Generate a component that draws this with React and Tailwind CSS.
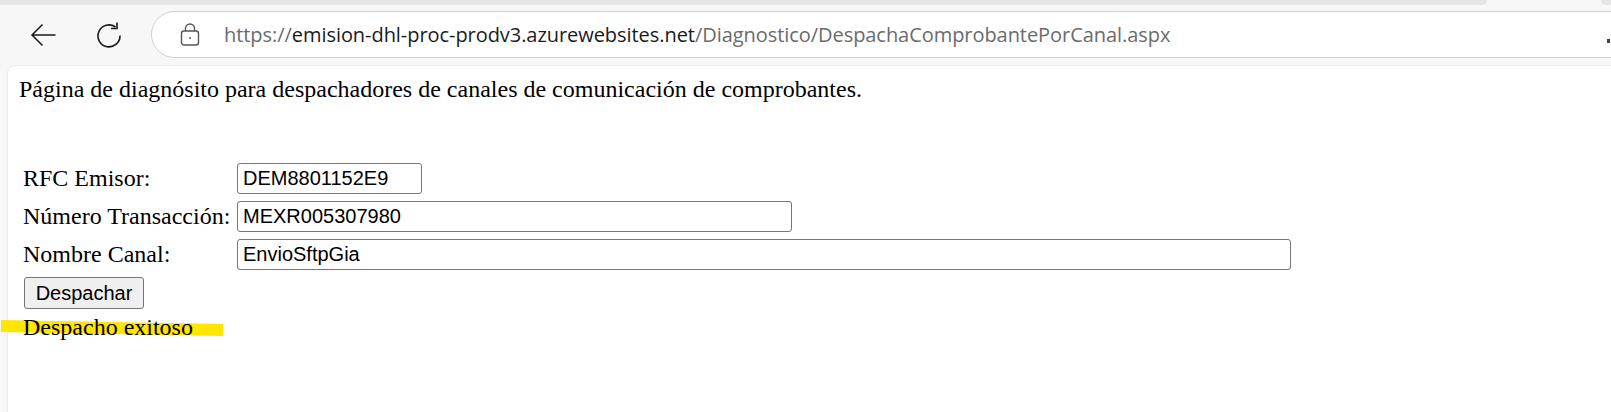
import React from 'react';

const Row = ({ label, value, width }) => (
    <div className="flex items-center h-[38px]">
        <span className="w-[214px] shrink-0 text-[24px] text-black whitespace-nowrap font-['Liberation_Serif',serif]">{label}</span>
        <input
            readOnly
            value={value}
            className={`${width} h-[31px] bg-white border border-[#767676] rounded-[3px] px-[5px] text-[20px] text-black font-['Liberation_Sans',sans-serif] outline-none`}
        />
    </div>
);

export default function App() {
    return (
        <div className="w-[1611px] h-[412px] overflow-hidden bg-[#f7f7f7] flex flex-col">
            <div className="h-[5px] shrink-0 flex justify-between">
                <div className="w-[1487px] bg-[#e5e5e5] rounded-br-lg" />
                <div className="w-[10px] bg-[#e5e5e5] rounded-bl-lg" />
            </div>
            <div className="h-[60px] shrink-0 flex items-center pb-[1px]">
                <svg className="ml-[30px] w-[26px] h-[24px]" viewBox="0 0 26 24" fill="none" stroke="#1a1a1a" strokeWidth="1.5">
                    <path d="M2 12H25.5M12.5 1.5L2 12 12.5 22.5" />
                </svg>
                <svg className="ml-[40px] w-[26px] h-[26px]" viewBox="0 0 26 26" fill="none" stroke="#1a1a1a" strokeWidth="1.6">
                    <path d="M19.5 5A11 11 0 1 0 24 13.5" />
                    <path d="M21 0.5V6.5H15" />
                </svg>
                <div className="ml-[29px] flex-1 h-[47px] -mr-[20px] flex items-center bg-white border border-[#d0d0d0] rounded-l-[24px] relative">
                    <svg className="ml-[28px] w-[20px] h-[24px]" viewBox="0 0 20 24" fill="none" stroke="#555" strokeWidth="1.4">
                        <rect x="1.5" y="8" width="17" height="14" rx="2.5" />
                        <path d="M5.5 8V5.5a4.5 4.5 0 0 1 9 0V8" />
                        <circle cx="10" cy="15" r="1" fill="#555" stroke="none" />
                    </svg>
                    <span className="ml-[24px] mt-[1px] text-[20px] tracking-[-0.055px] whitespace-nowrap text-[#6b6b6b] font-['Open_Sans',sans-serif]">
                        https://<span className="text-[#1a1a1a]">emision-dhl-proc-prodv3.azurewebsites.net</span>/Diagnostico/DespachaComprobantePorCanal.aspx
                    </span>
                    <div className="absolute right-[20px] top-[27px] w-[3px] h-[4px] bg-[#444]" />
                </div>
            </div>
            <div className="flex-1 ml-[7px] bg-white rounded-tl-lg border-t border-l border-[#ececec] pl-[11px]">
                <p className="mt-[9px] text-[24px] leading-[28px] text-black font-['Liberation_Serif',serif]">
                    Página de diagnósito para despachadores de canales de comunicación de comprobantes.
                </p>
                <div className="mt-[56px] pl-[4px]">
                    <Row label="RFC Emisor:" value="DEM8801152E9" width="w-[185px]" />
                    <Row label="Número Transacción:" value="MEXR005307980" width="w-[555px]" />
                    <Row label="Nombre Canal:" value="EnvioSftpGia" width="w-[1054px]" />
                    <button className="mt-[4px] ml-[1px] block w-[120px] h-[32px] bg-[#efefef] border border-[#767676] rounded-[3px] text-[20px] text-black font-['Liberation_Sans',sans-serif]">
                        Despachar
                    </button>
                    <div className="relative mt-[4px] w-fit">
                        <div className="absolute left-[-22px] top-[9px] w-[222px] h-[12px] bg-[#ffe600] rotate-[1deg]" />
                        <span className="relative text-[24px] leading-[28px] text-black font-['Liberation_Serif',serif]">Despacho exitoso</span>
                    </div>
                </div>
            </div>
        </div>
    );
}
